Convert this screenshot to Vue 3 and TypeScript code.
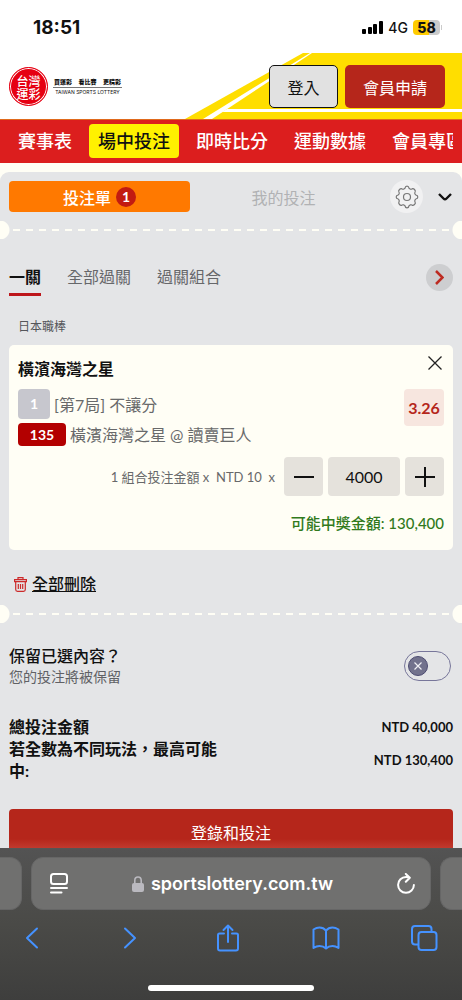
<script setup lang="ts">
import { ref } from 'vue'

const navItems: string[] = ['賽事表', '場中投注', '即時比分', '運動數據', '會員專區']
const activeNav = ref('場中投注')
const modes: string[] = ['一關', '全部過關', '過關組合']
const activeMode = ref('一關')
const stake = ref('4000')
const keepSelection = ref(false)

function step(delta: number): void {
  stake.value = String(Math.max(0, Number(stake.value) + delta))
}
</script>

<template>
  <div class="screen">
    <div class="status">
      <span class="clock">18:51</span>
      <div class="status-right">
        <svg width="21" height="13" viewBox="0 0 21 13" aria-hidden="true">
          <rect x="0" y="8" width="4" height="5" rx="1" />
          <rect x="6" y="6" width="4" height="7" rx="1" />
          <rect x="11" y="3" width="4" height="10" rx="1" />
          <rect x="17" y="0" width="4" height="13" rx="1" />
        </svg>
        <span class="network">4G</span>
        <span class="battery">58</span>
      </div>
    </div>

    <header class="header">
      <svg class="stripes" width="277" height="66" viewBox="0 0 277 66" aria-hidden="true">
        <path d="M118 0H277V66H0Z" fill="#ffde00" />
        <path d="M125 0H127L27 66H18Z" fill="#fff" />
        <path d="M42 56H277V59H37Z" fill="#fff" />
      </svg>
      <a class="logo" href="#">
        <span class="seal"><span class="seal-text"><span>台灣</span><span>運彩</span></span></span>
        <span class="slogan">
          <span class="slogan-zh"><span>買運彩</span><span>看比賽</span><span>更精彩</span></span>
          <span class="slogan-en">TAIWAN SPORTS LOTTERY</span>
        </span>
      </a>
      <div class="account">
        <button class="login" type="button">登入</button>
        <button class="join" type="button">會員申請</button>
      </div>
    </header>

    <nav class="nav">
      <div class="nav-list">
        <a
          v-for="item in navItems"
          :key="item"
          href="#"
          :class="['nav-item', { active: item === activeNav }]"
          @click.prevent="activeNav = item"
        >{{ item }}</a>
      </div>
    </nav>

    <main class="content">
      <section class="panel">
        <div class="slip-tabs">
          <button class="slip-tab current" type="button">投注單<span class="count">1</span></button>
          <button class="slip-tab" type="button">我的投注</button>
          <button class="gear" type="button" aria-label="設定">
            <svg width="24" height="24" viewBox="0 0 24 24" fill="none" stroke="#777" stroke-width="1.2" stroke-linejoin="round" aria-hidden="true">
              <path d="M10 3.2Q10.300 1.200 12 1.200T14 3.200L15.200 4.100Q16.200 4.500 17 3.900Q18.300 3.200 19.500 4.500T20.100 7Q19.500 7.800 19.900 8.800L20.800 10Q22.800 10.300 22.800 12T20.800 14L19.900 15.200Q19.500 16.200 20.100 17Q20.800 18.300 19.500 19.500T17 20.100Q16.200 19.500 15.200 19.900L14 20.800Q13.700 22.800 12 22.800T10 20.800L8.800 19.900Q7.800 19.500 7 20.100Q5.700 20.800 4.500 19.500T3.900 17Q4.500 16.200 4.100 15.200L3.200 14Q1.200 13.700 1.200 12T3.200 10L4.100 8.800Q4.500 7.800 3.900 7Q3.200 5.700 4.500 4.500T7 3.900Q7.800 4.500 8.800 4.100Z" />
              <circle cx="12" cy="12" r="3.500" />
            </svg>
          </button>
          <button class="fold" type="button" aria-label="收合">
            <svg width="14" height="8" viewBox="0 0 14 8" fill="none" stroke="#111" stroke-width="2.400" aria-hidden="true"><path d="M1 1L5.500 5.500Q7 7 8.500 5.500L13 1" /></svg>
          </button>
        </div>

        <div class="perforation"></div>

        <div class="modes">
          <button
            v-for="mode in modes"
            :key="mode"
            type="button"
            :class="['mode', { active: mode === activeMode }]"
            @click="activeMode = mode"
          >{{ mode }}</button>
          <button class="more" type="button" aria-label="更多">
            <svg width="9" height="15" viewBox="0 0 9 15" fill="none" stroke="#bd2b22" stroke-width="2.500" aria-hidden="true"><path d="M1 1L7.500 7.500L1 14" /></svg>
          </button>
        </div>

        <p class="league">日本職棒</p>

        <article class="card">
          <div class="card-head">
            <h2>橫濱海灣之星</h2>
            <button class="close" type="button" aria-label="移除">
              <svg width="14" height="14" viewBox="0 0 14 14" stroke="#222" stroke-width="1.300" aria-hidden="true"><path d="M0.500 0.500L13.500 13.500M13.500 0.500L0.500 13.500" /></svg>
            </button>
          </div>
          <div class="pick">
            <div class="pick-info">
              <div class="pick-line"><span class="tag grey">1</span>[第7局] 不讓分</div>
              <div class="pick-line"><span class="tag red">135</span>橫濱海灣之星 @ 讀賣巨人</div>
            </div>
            <span class="odds">3.26</span>
          </div>
          <div class="stake">
            <label class="stake-label" for="stake">1 組合投注金額 x&nbsp; NTD 10&nbsp; x</label>
            <button class="step" type="button" aria-label="減少" @click="step(-10)">
              <svg width="20" height="20" viewBox="0 0 20 20" stroke="#111" stroke-width="2" aria-hidden="true"><path d="M0 10H20" /></svg>
            </button>
            <input id="stake" v-model="stake" class="amount" type="text" inputmode="numeric" />
            <button class="step" type="button" aria-label="增加" @click="step(10)">
              <svg width="20" height="20" viewBox="0 0 20 20" stroke="#111" stroke-width="2" aria-hidden="true"><path d="M0 10H20M10 0V20" /></svg>
            </button>
          </div>
          <p class="payout">可能中獎金額: 130,400</p>
        </article>

        <button class="clear" type="button">
          <svg width="13" height="15" viewBox="0 0 13 15" fill="none" stroke="#cc2a2a" stroke-width="1.200" aria-hidden="true">
            <path d="M.600 2.600H12.400V4.700H.600ZM4 2.500V.700H9V2.500M1.700 4.700V12.500Q1.700 14.300 3.500 14.300H9.500Q11.300 14.300 11.300 12.500V4.700M4.300 7V12M6.500 7V12M8.700 7V12" />
          </svg>
          <span>全部刪除</span>
        </button>

        <div class="perforation"></div>

        <div class="keep">
          <label for="keep">
            <strong>保留已選內容？</strong>
            <span>您的投注將被保留</span>
          </label>
          <span class="switch">
            <input id="keep" v-model="keepSelection" type="checkbox" role="switch" />
            <svg class="knob" width="20" height="20" viewBox="0 0 20 20" aria-hidden="true">
              <circle cx="10" cy="10" r="9.500" fill="#72728d" stroke="#4d4c72" />
              <path d="M6.500 6.500L13.500 13.500M13.500 6.500L6.500 13.500" stroke="#f0f0f5" stroke-width="1.200" />
            </svg>
          </span>
        </div>

        <dl class="totals">
          <div><dt>總投注金額</dt><dd>NTD 40,000</dd></div>
          <div><dt>若全數為不同玩法，最高可能中:</dt><dd>NTD 130,400</dd></div>
        </dl>

        <button class="submit" type="button">登錄和投注</button>
      </section>
    </main>

    <footer class="browser">
      <div class="address-row">
        <span class="peek left"></span>
        <div class="address">
          <button type="button" aria-label="頁面選單">
            <svg width="18" height="21" viewBox="0 0 18 21" fill="none" stroke="#fff" stroke-width="2" stroke-linecap="round" aria-hidden="true">
              <rect x="1" y="1" width="16" height="10" rx="2.500" /><path d="M1 15H17M1 19.500H11.500" />
            </svg>
          </button>
          <span class="site">
            <svg width="12" height="16" viewBox="0 0 12 16" aria-hidden="true"><rect x="0" y="7" width="12" height="9" rx="2" fill="#bab9bf" /><path d="M2.800 8V4.500Q2.800 1 6 1T9.200 4.500V8" fill="none" stroke="#bab9bf" stroke-width="1.600" /></svg>
            sportslottery.com.tw
          </span>
          <button type="button" aria-label="重新載入">
            <svg width="18" height="22" viewBox="0 0 18 22" fill="none" stroke="#fff" stroke-width="2" stroke-linecap="round" stroke-linejoin="round" aria-hidden="true"><path d="M12.500 4.500Q10.800 4 9 4A7.900 7.900 0 1 0 16.900 12M8.800 .900L12.800 4.700L8.800 8.700" /></svg>
          </button>
        </div>
        <span class="peek right"></span>
      </div>
      <div class="tools">
        <button type="button" aria-label="上一頁">
          <svg width="14" height="22" viewBox="0 0 14 22"><path d="M12 1.500L2 11L12 20.500" /></svg>
        </button>
        <button type="button" aria-label="下一頁">
          <svg width="14" height="22" viewBox="0 0 14 22"><path d="M2 1.500L12 11L2 20.500" /></svg>
        </button>
        <button type="button" aria-label="分享">
          <svg width="24" height="28" viewBox="0 0 24 28"><path d="M8 9.500H3.500Q2 9.500 2 11V24.500Q2 26.500 4 26.500H20Q22 26.500 22 24.500V11Q22 9.500 20.500 9.500H16M12 18V1.500M7.500 6L12 1.500L16.500 6" /></svg>
        </button>
        <button type="button" aria-label="書籤">
          <svg width="28" height="24" viewBox="0 0 28 24"><path d="M14 4.500Q11.500 1.500 7.500 1.500Q4.500 1.500 1.500 3.500V22Q4.500 20 7.500 20Q11.500 20 14 22.500Q16.500 20 20.500 20Q23.500 20 26.500 22V3.500Q23.500 1.500 20.500 1.500Q16.500 1.500 14 4.500V22" /></svg>
        </button>
        <button type="button" aria-label="分頁">
          <svg width="27" height="26" viewBox="0 0 27 26"><rect x="7.500" y="7" width="18" height="18" rx="3" /><path d="M7 19.500H4Q1 19.500 1 16.500V4Q1 1 4 1H17.500Q20.500 1 20.500 4V6.500" /></svg>
        </button>
      </div>
      <div class="home-bar"></div>
    </footer>
  </div>
</template>

<style>
html,
body {
  background: #fff;
}
</style>

<style scoped>
* {
  box-sizing: border-box;
}
.screen {
  display: flex;
  flex-direction: column;
  height: 100vh;
  overflow: hidden;
  background: #fff;
  color: #111;
  font-family: Lato, 'Noto Sans CJK TC', sans-serif;
  font-size: 16px;
}
button,
input {
  font: inherit;
  color: inherit;
  margin: 0;
  padding: 0;
  border: 0;
  background: none;
}
button {
  cursor: pointer;
}
a {
  color: inherit;
  text-decoration: none;
}
p,
h2,
dl,
dd {
  margin: 0;
}
svg {
  display: block;
  flex: none;
}
.status {
  display: flex;
  flex: none;
  justify-content: space-between;
  align-items: center;
  height: 53px;
  padding: 2px 22px 0 33px;
  font-family: Inter, sans-serif;
}
.clock {
  font-size: 19px;
  font-weight: 700;
}
.status-right {
  display: flex;
  align-items: center;
  gap: 5px;
}
.network {
  font-size: 14px;
  font-weight: 500;
}
.battery {
  position: relative;
  width: 27px;
  height: 15px;
  border-radius: 4px;
  background: linear-gradient(90deg, #ffcc01 58%, #cbcbcb 58%);
  font-size: 14px;
  font-weight: 800;
  line-height: 15px;
  text-align: center;
}
.battery::after {
  content: '';
  position: absolute;
  top: 5px;
  right: -2px;
  width: 1px;
  height: 5px;
  background: #cbcbcb;
}
.header {
  position: relative;
  display: flex;
  flex: none;
  justify-content: space-between;
  height: 66px;
  padding: 12px 17px 0 9px;
}
.stripes {
  position: absolute;
  top: 0;
  right: 0;
}
.logo {
  position: relative;
  display: flex;
  align-items: center;
  gap: 5px;
  height: 43px;
}
.seal {
  display: grid;
  place-items: center;
  width: 39px;
  height: 39px;
  border: 1px solid #e60012;
  border-radius: 50%;
  background: #e60012;
  box-shadow: inset 0 0 0 1px #fff;
  color: #fff;
}
.seal-text {
  display: grid;
  font-family: 'Noto Sans CJK TC', sans-serif;
  font-size: 12px;
  font-weight: 500;
  line-height: 13px;
}
.slogan {
  display: flex;
  flex-direction: column;
  width: 69px;
}
.slogan-zh {
  display: flex;
  justify-content: space-between;
  padding: 0 1px;
  border-bottom: 1px solid #777;
  font-size: 6px;
  font-weight: 900;
  line-height: 10px;
}
.slogan-en {
  font-family: Inter, sans-serif;
  font-size: 5px;
  line-height: 9px;
  text-align: center;
  white-space: nowrap;
}
.account {
  position: relative;
  display: flex;
  gap: 7px;
}
.login,
.join {
  height: 43px;
  border-radius: 5px;
}
.login {
  width: 69px;
  border: 1px solid #111;
  background: #e1e1e1;
}
.join {
  width: 100px;
  background: #b5261b;
  color: #fff;
}
.nav {
  flex: none;
  height: 44px;
  padding: 4px 9px 0;
  border-top: 1px solid #e06a1d;
  background: #dc1e1e;
}
.nav-list {
  display: flex;
  gap: 8px;
  overflow: hidden;
}
.nav-item {
  flex: none;
  padding: 0 9px;
  border-radius: 4px;
  color: #fff;
  font-size: 18px;
  font-weight: 500;
  line-height: 34px;
}
.nav-item.active {
  background: #fff100;
  color: #111;
}
.content {
  flex: 1;
  min-height: 0;
  padding-top: 9px;
  overflow: hidden;
  background: #fffef5;
}
.panel {
  border-radius: 9px 9px 0 0;
  background: #e4e5e7;
}
.slip-tabs {
  display: flex;
  align-items: center;
  gap: 3px;
  height: 49px;
  padding: 0 9px;
}
.slip-tab {
  display: flex;
  flex: 1;
  justify-content: center;
  align-items: center;
  gap: 5px;
  height: 31px;
  border-radius: 4px;
  color: #b1b2b4;
}
.slip-tab.current {
  background: #ff7900;
  color: #fff;
  font-weight: 500;
}
.count {
  width: 20px;
  height: 20px;
  border-radius: 50%;
  background: #c21b11;
  font-size: 14px;
  font-weight: 700;
  line-height: 20px;
}
.gear {
  display: grid;
  place-items: center;
  width: 33px;
  height: 33px;
  margin-left: 13px;
  border-radius: 50%;
  background: #f1f1f2;
}
.fold {
  display: grid;
  place-items: center;
  width: 16px;
  height: 30px;
  margin-left: 11px;
}
.perforation {
  height: 18px;
  background:
    radial-gradient(circle at 0 50%, #fffef5 9px, transparent 10px),
    radial-gradient(circle at 100% 50%, #fffef5 9px, transparent 10px),
    repeating-linear-gradient(90deg, #fffef5 0 7px, transparent 7px 13px) 13px 50% / calc(100% - 26px) 2px no-repeat;
}
.modes {
  display: flex;
  align-items: center;
  gap: 26px;
  padding: 19px 9px 0;
}
.mode {
  height: 38px;
  border-bottom: 3px solid transparent;
  color: #66676a;
}
.mode.active {
  border-color: #bd161b;
  color: #111;
  font-weight: 700;
}
.more {
  display: grid;
  place-items: center;
  width: 27px;
  height: 27px;
  margin-left: auto;
  border-radius: 50%;
  background: #cdced0;
}
.league {
  padding: 22px 18px 9px;
  color: #55565a;
  font-size: 12px;
  line-height: 18px;
}
.card {
  margin: 0 9px;
  padding: 9px 9px 15px;
  border-radius: 5px;
  background: #fffef5;
}
.card-head {
  display: flex;
  justify-content: space-between;
  height: 35px;
}
.card h2 {
  font-size: 16px;
  font-weight: 700;
  line-height: 30px;
}
.close {
  display: grid;
  place-items: center;
  width: 18px;
  height: 18px;
}
.pick {
  display: flex;
  justify-content: space-between;
}
.pick-info {
  display: flex;
  flex-direction: column;
  gap: 4px;
}
.pick-line {
  display: flex;
  align-items: center;
  gap: 4px;
  color: #68696a;
  line-height: 23px;
}
.tag {
  border-radius: 4px;
  color: #fff;
  font-size: 14px;
  font-weight: 700;
  text-align: center;
}
.tag.grey {
  width: 32px;
  background: #c7c7ce;
  line-height: 30px;
}
.tag.red {
  width: 48px;
  background: #b30000;
}
.odds {
  width: 40px;
  height: 37px;
  border-radius: 4px;
  background: #f7e6df;
  color: #b5261b;
  font-weight: 700;
  line-height: 38px;
  text-align: center;
}
.stake {
  display: flex;
  justify-content: flex-end;
  align-items: center;
  gap: 5px;
  margin-top: 11px;
}
.stake-label {
  margin-right: 4px;
  color: #68696a;
  font-size: 13px;
}
.step {
  display: grid;
  place-items: center;
  width: 39px;
  height: 39px;
  border-radius: 4px;
  background: #e5e2dc;
}
.amount {
  width: 72px;
  height: 39px;
  border-radius: 4px;
  background: #e5e2dc;
  text-align: center;
}
.payout {
  margin-top: 15px;
  color: #317a1c;
  font-size: 15px;
  font-weight: 500;
  line-height: 24px;
  text-align: right;
}
.clear {
  display: flex;
  align-items: center;
  gap: 5px;
  height: 24px;
  margin: 22px 0 9px 14px;
  font-weight: 500;
  line-height: 24px;
}
.clear span {
  text-decoration: underline;
}
.keep {
  display: flex;
  justify-content: space-between;
  align-items: center;
  padding: 22px 11px 0 9px;
}
.keep strong,
.keep label span {
  display: block;
  line-height: 22px;
}
.keep strong {
  font-weight: 500;
}
.keep label span {
  color: #606165;
  font-size: 14px;
  line-height: 20px;
}
.switch {
  position: relative;
  display: block;
  height: 30px;
}
.switch input {
  display: block;
  appearance: none;
  width: 47px;
  height: 30px;
  border: 1px solid #77769a;
  border-radius: 15px;
}
.knob {
  position: absolute;
  top: 5px;
  left: 4px;
  pointer-events: none;
}
.switch input:checked + .knob {
  left: 23px;
}
.totals {
  padding: 29px 9px 0;
  font-weight: 700;
  line-height: 22px;
}
.totals div {
  display: flex;
  justify-content: space-between;
  align-items: center;
}
.totals dt {
  width: 50%;
  padding-right: 12px;
}
.totals dd {
  font-size: 13px;
}
.submit {
  display: block;
  width: calc(100% - 18px);
  height: 46px;
  margin: 27px 9px 0;
  border-radius: 4px;
  background: linear-gradient(#b5261b 65%, #c9493d);
  color: #fff;
}
.browser {
  flex: none;
  height: 152px;
  border-top: 1px solid #555;
  background: linear-gradient(#535353, #4a4a47 50%, #3e3e3d);
  color: #fff;
}
.address-row {
  display: flex;
  gap: 9px;
  padding-top: 8px;
}
.peek,
.address {
  height: 53px;
  border: 1px solid #666;
  background: #70706f;
}
.peek {
  width: 22px;
}
.peek.left {
  border-left: 0;
  border-radius: 0 12px 12px 0;
}
.peek.right {
  border-right: 0;
  border-radius: 12px 0 0 12px;
}
.address {
  display: flex;
  flex: 1;
  justify-content: space-between;
  align-items: center;
  padding: 0 15px 0 18px;
  border-radius: 12px;
}
.site {
  display: flex;
  align-items: center;
  gap: 7px;
  font-family: Inter, sans-serif;
  font-size: 18px;
  font-weight: 600;
}
.tools {
  display: flex;
  justify-content: space-between;
  align-items: center;
  height: 56px;
  padding: 0 24px 0 18px;
}
.tools button {
  display: grid;
  place-items: center;
  width: 28px;
}
.tools svg {
  fill: none;
  stroke: #4592ff;
  stroke-width: 2;
  stroke-linecap: round;
  stroke-linejoin: round;
}
.home-bar {
  width: 36%;
  height: 6px;
  margin: 19px auto 0;
  border-radius: 3px;
  background: #fff;
}
</style>
